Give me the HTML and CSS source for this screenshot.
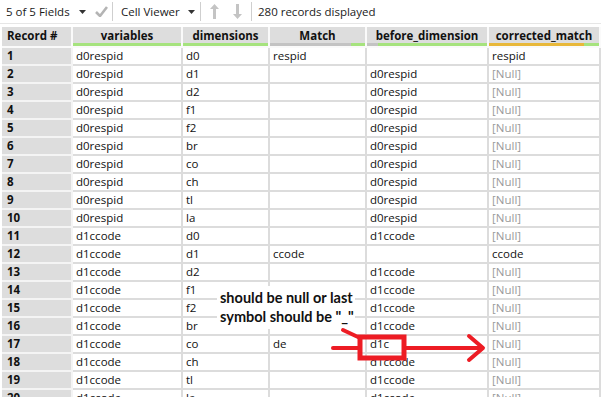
FILE: index.html
```html
<!DOCTYPE html>
<html lang="en">

<head>
    <meta charset="utf-8">
    <title>Cell Viewer</title>
    <link rel="stylesheet" href="styles.css">
</head>

<body>

    <div class="toolbar">
        <span class="tb-text fields">5 of 5 Fields</span>
        <svg class="caret" width="7" height="4" viewBox="0 0 7 4"><path d="M0 0h7L3.5 4z" fill="#333"/></svg>
        <svg class="check" width="13" height="11" viewBox="0 0 13 11"><path d="M1 6l4 4 7-9" fill="none" stroke="#b4b4b4" stroke-width="2.6"/></svg>
        <span class="sep"></span>
        <span class="tb-text viewer">Cell Viewer</span>
        <svg class="caret" width="7" height="4" viewBox="0 0 7 4"><path d="M0 0h7L3.5 4z" fill="#333"/></svg>
        <span class="sep"></span>
        <svg class="arrow up" width="9" height="15" viewBox="0 0 9 15"><path d="M4.5 0L9 5H6v10H3V5H0z" fill="#c4c4c4"/></svg>
        <svg class="arrow down" width="9" height="15" viewBox="0 0 9 15"><path d="M4.5 15L9 10H6V0H3v10H0z" fill="#c4c4c4"/></svg>
        <span class="sep"></span>
        <span class="tb-text count">280 records displayed</span>
    </div>

    <section class="grid" id="grid">
        <div class="head rec">Record #</div>
        <div class="head">variables<span class="bar"><i class="ok" style="flex-basis:100%"></i></span></div>
        <div class="head">dimensions<span class="bar"><i class="ok" style="flex-basis:100%"></i></span></div>
        <div class="head">Match<span class="bar"><i class="nul" style="flex-basis:85%"></i><i class="ok" style="flex-basis:15%"></i></span></div>
        <div class="head">before_dimension<span class="bar"><i class="nul" style="flex-basis:9%"></i><i class="ok" style="flex-basis:91%"></i></span></div>
        <div class="head">corrected_match<span class="bar"><i class="warn" style="flex-basis:86%"></i><i class="ok" style="flex-basis:14%"></i></span></div>
    </section>

    <div class="note">should be null or last<br>symbol should be "_"</div>

    <svg class="marks" width="601" height="397" viewBox="0 0 601 397">
        <g fill="none" stroke="#ed1c24" stroke-width="4" stroke-linecap="round" stroke-linejoin="round">
            <path d="M343 330l15 7"/>
            <path d="M333 348h25"/>
            <rect x="360" y="337" width="44" height="21" stroke-width="5" stroke-linecap="butt" stroke-linejoin="miter"/>
            <path d="M406 348h76"/>
            <path d="M469 336l14 12-14 12"/>
        </g>
    </svg>

    <script>
        const rader = [
            ["d0respid", "d0", "respid", "", "respid"],
            ["d0respid", "d1", "", "d0respid", null],
            ["d0respid", "d2", "", "d0respid", null],
            ["d0respid", "f1", "", "d0respid", null],
            ["d0respid", "f2", "", "d0respid", null],
            ["d0respid", "br", "", "d0respid", null],
            ["d0respid", "co", "", "d0respid", null],
            ["d0respid", "ch", "", "d0respid", null],
            ["d0respid", "tl", "", "d0respid", null],
            ["d0respid", "la", "", "d0respid", null],
            ["d1ccode", "d0", "", "d1ccode", null],
            ["d1ccode", "d1", "ccode", "", "ccode"],
            ["d1ccode", "d2", "", "d1ccode", null],
            ["d1ccode", "f1", "", "d1ccode", null],
            ["d1ccode", "f2", "", "d1ccode", null],
            ["d1ccode", "br", "", "d1ccode", null],
            ["d1ccode", "co", "de", "d1c", null],
            ["d1ccode", "ch", "", "d1ccode", null],
            ["d1ccode", "tl", "", "d1ccode", null],
            ["d1ccode", "la", "", "d1ccode", null]
        ];

        const grid = document.querySelector("#grid");
        rader.forEach((rad, i) => {
            const nr = document.createElement("div");
            nr.className = "cell rec";
            nr.textContent = i + 1;
            grid.appendChild(nr);
            rad.forEach(værdi => {
                const celle = document.createElement("div");
                celle.className = "cell";
                if (værdi === null) {
                    celle.classList.add("null");
                    celle.textContent = "[Null]";
                } else {
                    celle.textContent = værdi;
                }
                grid.appendChild(celle);
            });
        });
    </script>
</body></html>
```

FILE: styles.css
```css
body {
    margin: 0;
    width: 601px;
    height: 397px;
    overflow: hidden;
    position: relative;
    font-family: "Open Sans", "Segoe UI", sans-serif;
    font-size: 11.5px;
    color: #111;
    background: #fff;
}

.toolbar {
    height: 23px;
    display: flex;
    align-items: center;
    border-bottom: 1px solid #e6e6e6;
    padding-left: 6px;
}

.tb-text {
    white-space: nowrap;
    color: #1a1a1a;
}

.fields {
    width: 63px;
}

.caret {
    margin-left: 10px;
}

.check {
    margin-left: 9px;
}

.sep {
    width: 1px;
    height: 19px;
    background: #cfcfcf;
    margin-left: 4px;
}

.viewer {
    width: 59px;
    margin-left: 8px;
}

.viewer + .caret {
    margin-left: 8px;
}

.viewer + .caret + .sep {
    margin-left: 5px;
}

.up {
    margin-left: 9px;
}

.down {
    margin-left: 14px;
}

.down + .sep {
    margin-left: 9px;
}

.count {
    margin-left: 6px;
}

.grid {
    display: grid;
    grid-template-columns: 71px 110px 87px 97px 122px 112px;
    margin: 3px 0 0 2px;
}

.head {
    position: relative;
    height: 21px;
    box-sizing: border-box;
    background: #dddddd;
    border-right: 2px solid #fafafa;
    border-bottom: 2px solid #fafafa;
    font-weight: bold;
    text-align: center;
    line-height: 17px;
    white-space: nowrap;
}

.head.rec {
    text-align: left;
    padding-left: 5px;
}

.bar {
    position: absolute;
    left: 0;
    right: 0;
    bottom: 0;
    height: 3px;
    display: flex;
}

.bar i {
    display: block;
}

.ok {
    background: #a6e37e;
}

.nul {
    background: #c3c3c3;
}

.warn {
    background: #e8b83a;
}

.cell {
    height: 18px;
    box-sizing: border-box;
    border-right: 2px solid #dcdcdc;
    border-bottom: 2px solid #dcdcdc;
    line-height: 16px;
    padding-left: 3px;
    white-space: nowrap;
    overflow: hidden;
}

.cell.rec {
    background: #dddddd;
    border-color: #f4f4f4;
    font-weight: bold;
    padding-left: 5px;
}

.null {
    color: #9a9a9a;
}

.note {
    position: absolute;
    left: 217px;
    top: 286px;
    width: 138px;
    height: 43px;
    box-sizing: border-box;
    padding: 2px 0 0 3px;
    background: #fff;
    font-family: Lato, "Open Sans", sans-serif;
    font-weight: bold;
    font-size: 14.5px;
    line-height: 19px;
    white-space: nowrap;
    color: #111;
}

.marks {
    position: absolute;
    left: 0;
    top: 0;
    pointer-events: none;
}
```
